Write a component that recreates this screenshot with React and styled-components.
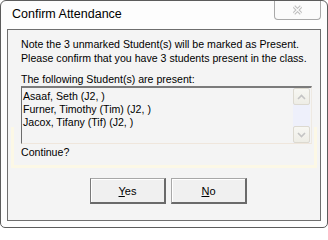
import React from "react";
import styled, { createGlobalStyle } from "styled-components";

const GlobalStyle = createGlobalStyle`
  html, body { margin: 0; padding: 0; background: #ffffff; }
  body { font-family: "Liberation Sans", Arial, sans-serif; }
  * { box-sizing: border-box; }
`;

const Window = styled.div`
  width: 328px;
  height: 228px;
  border: 1px solid #5c5c5c;
  border-radius: 6px 6px 5px 5px;
  background: #fdfdfd;
  display: flex;
  flex-direction: column;
  overflow: hidden;
`;

const TitleBar = styled.div`
  height: 28px;
  display: flex;
  align-items: flex-start;
  padding-left: 11px;
`;

const Title = styled.div`
  margin-top: 6px;
  font-size: 12.5px;
  line-height: 15px;
  color: #000;
`;

const CloseButton = styled.div`
  margin-left: auto;
  margin-right: 6px;
  margin-top: -1px;
  width: 47px;
  height: 20px;
  border: 1px solid #a9a9a9;
  border-top: none;
  border-radius: 0 0 4px 4px;
  background: #fbfbfb;
  display: flex;
  align-items: center;
  justify-content: center;
  padding-top: 1px;
`;

const Panel = styled.div`
  flex: 1;
  margin: 0 6px 6px 6px;
  border: 1px solid #6e6e6e;
  background: #f4f4f4;
  display: flex;
  flex-direction: column;
  padding: 7px 8px 0 13px;
  font-size: 10.6px;
  line-height: 14px;
  color: #000;
`;

const Message = styled.div`
  white-space: nowrap;
  margin-top: ${(p) => p.$gap || 0}px;
`;

const ListArea = styled.div`
  position: relative;
  z-index: 0;
  &::before {
    content: "";
    position: absolute;
    z-index: -1;
    top: 41px;
    left: -10px;
    right: -5px;
    bottom: -9px;
    border: 3px solid #fcf8e6;
    border-top: none;
  }
`;

const ListBox = styled.div`
  height: 58px;
  display: flex;
  background: #f4f4f4;
  border-top: 2px solid #7b7b7b;
  border-left: 1px solid #6c6c6c;
  border-bottom: 1px solid #efe6dc;
  border-right: 1px solid #eee9e2;
`;

const Items = styled.div`
  flex: 1;
  padding: 2px 0 0 1px;
  line-height: 13px;
  white-space: nowrap;
`;

const Item = styled.div``;

const ScrollBar = styled.div`
  width: 17px;
  margin-right: 1px;
  display: flex;
  flex-direction: column;
  background: #eef0fb;
`;

const ScrollButton = styled.div`
  height: 17px;
  border: 1px solid #dcd9d0;
  border-radius: 2px;
  background: linear-gradient(#f7f7f3, #eeede6);
  display: flex;
  align-items: center;
  justify-content: center;
`;

const Track = styled.div`
  flex: 1;
`;

const ButtonRow = styled.div`
  display: flex;
  gap: 5px;
  margin-top: 19px;
  margin-left: 69px;
`;

const Button = styled.div`
  width: 76px;
  height: 26px;
  border-top: 1px solid #a8a8a8;
  border-left: 1px solid ${(p) => (p.$default ? "#7a7a7a" : "#a8a8a8")};
  border-right: 2px solid #6a6a6a;
  border-bottom: 2px solid #6a6a6a;
  background: #f0f0f0;
  box-shadow: inset 1px 1px 0 #ffffff;
  display: flex;
  align-items: center;
  justify-content: center;
  font-size: 11px;
  color: #000;
  padding-top: 1px;
`;

const Accel = styled.span`
  text-decoration: underline;
`;

const CloseIcon = () => (
  <svg width="11" height="10" viewBox="0 0 11 10">
    <path d="M2 1.5 L9 8.5 M9 1.5 L2 8.5" stroke="#bdbdbd" strokeWidth="3.2" fill="none" />
    <path d="M2 1.5 L9 8.5 M9 1.5 L2 8.5" stroke="#fbfbfb" strokeWidth="1.2" fill="none" />
  </svg>
);

const Chevron = ({ up }) => (
  <svg width="9" height="6" viewBox="0 0 9 6">
    <path
      d={up ? "M1 5 L4.5 1.5 L8 5" : "M1 1 L4.5 4.5 L8 1"}
      stroke="#c4c4c4"
      strokeWidth="1.6"
      fill="none"
    />
  </svg>
);

export default function App() {
  return (
    <>
      <GlobalStyle />
      <Window>
        <TitleBar>
          <Title>Confirm Attendance</Title>
          <CloseButton>
            <CloseIcon />
          </CloseButton>
        </TitleBar>
        <Panel>
          <Message>Note the 3 unmarked Student(s) will be marked as Present.</Message>
          <Message>Please confirm that you have 3 students present in the class.</Message>
          <Message $gap={7}>The following Student(s) are present:</Message>
          <ListArea>
            <ListBox>
              <Items>
                <Item>Asaaf, Seth (J2, )</Item>
                <Item>Furner, Timothy (Tim) (J2, )</Item>
                <Item>Jacox, Tifany (Tif) (J2, )</Item>
              </Items>
              <ScrollBar>
                <ScrollButton>
                  <Chevron up />
                </ScrollButton>
                <Track />
                <ScrollButton>
                  <Chevron />
                </ScrollButton>
              </ScrollBar>
            </ListBox>
            <Message $gap={1}>Continue?</Message>
          </ListArea>
          <ButtonRow>
            <Button $default>
              <span>
                <Accel>Y</Accel>es
              </span>
            </Button>
            <Button>
              <span>
                <Accel>N</Accel>o
              </span>
            </Button>
          </ButtonRow>
        </Panel>
      </Window>
    </>
  );
}
